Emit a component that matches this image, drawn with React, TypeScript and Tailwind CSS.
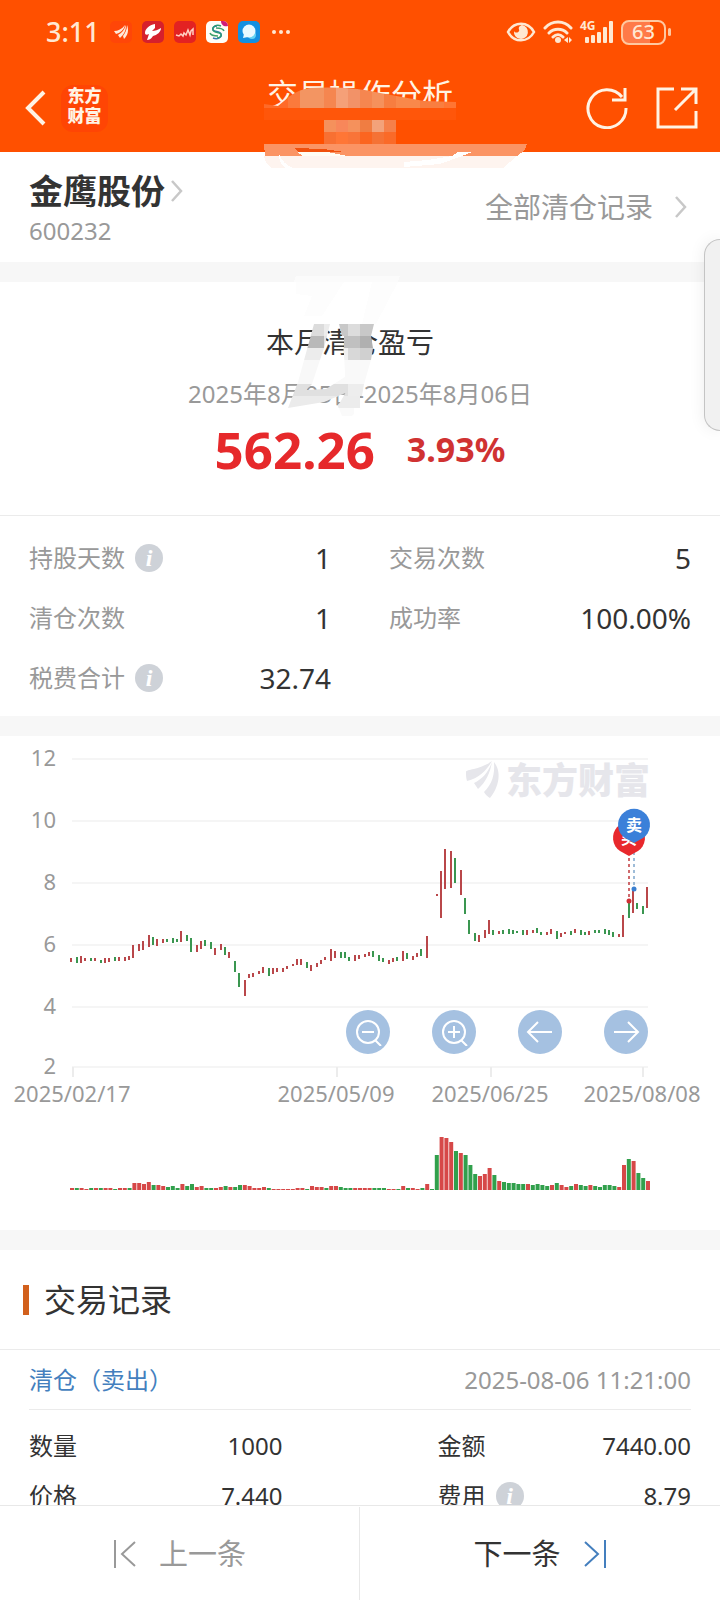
import type { ReactNode } from "react";

interface Stat {
  label: string;
  value: string;
  info?: boolean;
}

const stats: Stat[] = [
  { label: "持股天数", value: "1", info: true },
  { label: "交易次数", value: "5" },
  { label: "清仓次数", value: "1" },
  { label: "成功率", value: "100.00%" },
  { label: "税费合计", value: "32.74", info: true },
];

const tradeDetails: Stat[] = [
  { label: "数量", value: "1000" },
  { label: "金额", value: "7440.00" },
  { label: "价格", value: "7.440" },
  { label: "费用", value: "8.79", info: true },
];

const RED = "#b9474a";
const GREEN = "#3a9650";

// x, top, bottom, r = up day / g = down day
const candleData =
  "71,222,226,r 77,221,227,g 81,220,227,r 85,222,225,r 91,222,225,g 95,222,225,r 101,224,227,g 105,222,227,r 109,222,226,r 115,221,225,g 119,221,225,r 125,221,225,r 129,220,224,r 133,209,222,r 139,208,215,r 143,205,214,r 149,199,211,r 153,201,209,g 157,203,210,r 163,203,207,r 167,203,206,g 173,202,207,g 177,203,206,g 181,195,206,r 187,199,205,g 191,202,216,g 197,209,216,r 201,205,213,r 205,204,210,g 211,206,213,g 215,212,219,r 221,208,214,r 225,211,219,g 229,216,222,r 235,225,236,g 239,237,251,g 245,244,260,r 249,238,242,r 253,237,241,r 259,235,238,r 263,231,237,r 269,232,240,g 273,232,238,r 277,232,236,r 283,232,236,r 287,230,233,r 293,228,230,r 297,223,229,r 301,223,229,r 307,226,232,g 311,229,235,r 317,227,231,r 321,224,228,r 325,221,224,r 331,213,225,r 335,215,222,r 341,216,222,g 345,216,222,g 349,221,225,g 355,219,225,r 359,219,223,r 365,218,221,r 369,216,220,r 373,215,221,g 379,219,225,g 383,222,226,g 389,224,228,r 393,222,226,r 397,221,225,g 403,215,225,r 407,217,223,g 413,220,224,r 417,217,221,r 421,213,220,g 427,200,222,r 437,158,160,r 441,135,182,r 445,113,153,r 451,115,152,r 455,122,147,g 461,134,159,r 465,162,178,g 469,184,198,g 475,197,205,g 479,199,206,r 485,194,202,r 489,184,198,r 493,194,199,g 499,195,198,r 503,194,198,g 509,193,198,g 513,194,198,g 517,195,197,g 523,194,199,g 527,194,199,r 533,194,197,r 537,192,197,g 541,196,199,g 547,196,199,r 551,193,198,r 557,195,203,g 561,197,201,r 565,196,198,r 571,195,199,g 575,193,197,r 581,194,199,g 585,196,199,g 589,195,199,r 595,194,197,g 599,194,197,g 605,193,198,g 609,194,199,g 613,196,201,g 619,198,201,r 623,179,201,r 629,166,182,g 633,155,177,r 637,167,173,g 643,170,178,g 647,151,172,r";

const volumeData =
  "r2 g2 r2 r1 g2 r2 g2 r2 r2 g1 r2 r2 g2 r7 r7 r6 r8 g5 r5 r4 g3 g4 g2 r6 g4 g6 r3 r4 g2 g2 r2 r3 g4 r3 g3 g5 r5 r4 r2 r2 r3 g2 r1 r1 r1 r1 r1 r2 r2 g1 r4 r3 r3 g2 r4 r4 g3 g2 g2 r2 r2 r2 r2 g2 g2 g2 r1 r1 g1 r4 g2 r2 r1 g2 r6 g1 g35 r53 r52 r48 g39 r37 g35 g25 g16 r14 r16 r22 g15 r9 g8 g7 g7 g6 g6 r6 g5 g6 g5 g4 r5 g7 r5 r3 g4 r6 g5 g4 r5 g4 g3 g5 g5 g4 r3 r25 g31 r29 g17 g12 r9";

const candles = candleData.split(" ").map((item) => {
  const [x, top, bottom, dir] = item.split(",");
  return { x: +x, top: +top, bottom: +bottom, color: dir === "r" ? RED : GREEN };
});

const volumes = volumeData.split(" ").map((item, i) => ({
  x: 70 + i * 4.8,
  height: Number(item.slice(1)) || 1,
  color: item[0] === "r" ? "#d64848" : "#31a04c",
}));

const priceAxis = [
  { label: "12", y: 23 },
  { label: "10", y: 85 },
  { label: "8", y: 147 },
  { label: "6", y: 209 },
  { label: "4", y: 271 },
  { label: "2", y: 331 },
];

const dateAxis = [
  { label: "2025/02/17", x: 73 },
  { label: "2025/05/09", x: 337 },
  { label: "2025/06/25", x: 491 },
  { label: "2025/08/08", x: 643 },
];

function InfoButton({ label }: { label: string }) {
  return (
    <button
      aria-label={label + "说明"}
      className="flex size-7 items-center justify-center rounded-full bg-[#ced2d8] font-['Liberation_Serif',serif] text-2xl leading-7 font-bold text-white italic"
    >
      i
    </button>
  );
}

function Divider() {
  return <div className="h-5 shrink-0 bg-[#f7f7f7]" />;
}

function StatusBar() {
  return (
    <div className="flex h-16 items-center justify-between pr-[49px] pl-[46px] text-[#ffe8d2]">
      <div className="flex items-center gap-[10px]">
        <span className="text-[27px] leading-8 font-medium">3:11</span>
        <svg width="22" height="22" viewBox="0 0 22 22">
          <rect width="22" height="22" rx="5" fill="#ff4608" />
          <path d="M4 10c4 0 8-2 11-6-1 5-5 8-9 9z" fill="#ffeadb" />
          <path d="M8 14c4-2 6-5 8-10 0 6-2 9-6 13z" fill="#ffeadb" />
          <path d="M13 15c2-3 4-6 4-11 2 5 1 10-3 14z" fill="#ffeadb" />
        </svg>
        <svg width="22" height="22" viewBox="0 0 22 22">
          <rect width="22" height="22" rx="5" fill="#d6202c" />
          <path
            d="M13 3c-6 1-10 5-10 9 0 2 2 2 4 1l-2 6c2 0 4-1 6-4 4-1 8-4 8-8-3 2-6 3-9 3l3-3z"
            fill="#fff"
          />
        </svg>
        <svg width="22" height="22" viewBox="0 0 22 22">
          <rect width="22" height="22" rx="5" fill="#e32222" />
          <path
            d="M2 14l3 1 2-2 2 2 1-3 2 2 2-5 2 5 1-4 2-2v6"
            fill="none"
            stroke="#ffd0c4"
            strokeWidth="1.5"
          />
        </svg>
        <svg width="22" height="22" viewBox="0 0 22 22">
          <rect width="22" height="22" rx="5" fill="#fffdf6" />
          <g fill="none" strokeWidth="1.5">
            <path d="M7 17c5 2 9-1 8-4s-6-2-8-4c-1-2 1-4 4-4" stroke="#3a78b4" />
            <path d="M15 5c-5-2-9 1-8 4s6 2 8 4c1 2-1 4-4 4" stroke="#2c9a74" />
            <path d="M4 12c1 3 5 3 8 3M18 10c-1-3-5-3-8-3" stroke="#3fa06c" />
          </g>
          <path d="M15 0h2a5 5 0 0 1 5 5c-4 1-7-1-7-5z" fill="#d01c78" />
        </svg>
        <svg width="22" height="22" viewBox="0 0 22 22">
          <rect width="22" height="22" rx="5" fill="#1390e0" />
          <circle cx="14" cy="14" r="4" fill="#64d4f4" />
          <circle cx="11" cy="10" r="6.500" fill="#e8faff" />
          <path d="M6 13l-1 4 5-1z" fill="#e8faff" />
        </svg>
        <svg width="22" height="22" viewBox="0 0 22 22" fill="currentColor">
          <circle cx="4" cy="11" r="2" />
          <circle cx="11" cy="11" r="2" />
          <circle cx="18" cy="11" r="2" />
        </svg>
      </div>
      <div className="flex items-center gap-[7px]">
        <svg width="30" height="22" viewBox="0 0 30 22" fill="none" stroke="currentColor">
          <path d="M2 11c6-11 20-11 26 0-6 11-20 11-26 0z" strokeWidth="2.500" />
          <path
            d="M16 4a7 7 0 1 1-8 6c1 2 4 2 5 0 1-1-1-2 0-4 1-1 2-2 3-2z"
            fill="currentColor"
            stroke="none"
          />
        </svg>
        <svg width="30" height="24" viewBox="0 0 30 24" fill="none" stroke="currentColor">
          <path
            d="M2 8c7-8 19-8 26 0M6 13c5-5 13-5 18 0M10 17c3-3 7-3 10 0"
            strokeWidth="3"
            strokeLinecap="round"
          />
          <circle cx="15" cy="20" r="3" fill="currentColor" stroke="none" />
          <path d="M25 17v6l-4-3zM26 17v6l3-3z" fill="currentColor" stroke="none" />
        </svg>
        <span className="relative">
          <svg width="34" height="24" viewBox="0 0 34 24" fill="currentColor">
            <rect x="5" y="17" width="4" height="6" rx="1" />
            <rect x="11" y="15" width="4" height="8" rx="1" />
            <rect x="17" y="12" width="4" height="11" rx="1" />
            <rect x="23" y="7" width="4" height="16" rx="1" />
            <rect x="29" y="1" width="4" height="22" rx="1" />
          </svg>
          <span className="absolute top-0 left-0 text-xs leading-3 font-bold">4G</span>
        </span>
        <span className="flex items-center gap-[2px]">
          <span className="flex h-[25px] w-[45px] items-center justify-center rounded-lg border-2 border-[#ffc8a0] bg-linear-to-r from-[#ff7a48] from-65% to-[#ff5000] to-65% text-xl leading-5 font-medium">
            63
          </span>
          <span className="h-2 w-[3px] rounded-sm bg-[#ffc8a0]" />
        </span>
      </div>
    </div>
  );
}

function Header() {
  return (
    <header className="shrink-0 bg-[#ff5000] text-[#fff3e4]">
      <StatusBar />
      <div className="grid h-[88px] grid-cols-[1fr_auto_1fr] items-center px-[22px]">
        <div className="flex items-center gap-3">
          <button aria-label="返回">
            <svg width="27" height="38" viewBox="0 0 27 38" fill="none" stroke="currentColor">
              <path d="M22 3L6 19l16 16" strokeWidth="4" />
            </svg>
          </button>
          <a
            href="#home"
            className="flex size-[47px] flex-col items-center justify-center rounded-xl bg-[#ff4504] pb-1 text-[17px] leading-5 font-black"
          >
            <span>东方</span>
            <span>财富</span>
          </a>
        </div>
        <div className="flex flex-col items-center">
          <h1 className="text-[31px] leading-9">交易操作分析</h1>
          <div className="h-7" />
        </div>
        <div className="flex items-center justify-end gap-7">
          <button aria-label="刷新">
            <svg width="42" height="42" viewBox="0 0 42 42" fill="none" stroke="currentColor">
              <path d="M40 21A19 19 0 1 1 36 10" strokeWidth="3" />
              <path d="M39 1v12H26" strokeWidth="3" />
            </svg>
          </button>
          <button aria-label="分享">
            <svg width="42" height="42" viewBox="0 0 42 42" fill="none" stroke="currentColor">
              <path d="M18 2H2v38h38V24" strokeWidth="3" />
              <path d="M25 2h15v15M40 2L19 23" strokeWidth="3" />
            </svg>
          </button>
        </div>
      </div>
    </header>
  );
}

function Chevron() {
  return (
    <svg width="12" height="24" viewBox="0 0 12 24" fill="none" stroke="#c8c8c8">
      <path d="M1 2l9 10-9 10" strokeWidth="2.500" />
    </svg>
  );
}

function StockInfo() {
  return (
    <section className="flex h-[110px] shrink-0 items-center justify-between pr-[33px] pl-[29px]">
      <div className="pt-[3px]">
        <a href="#stock" className="flex items-center gap-[6px]">
          <h2 className="text-[34px] leading-10 font-bold text-[#333]">金鹰股份</h2>
          <Chevron />
        </a>
        <p className="pt-1 text-2xl leading-8 text-[#999]">600232</p>
      </div>
      <a href="#all" className="flex items-center gap-[22px] text-[28px] leading-10 text-[#999]">
        全部清仓记录
        <Chevron />
      </a>
    </section>
  );
}

function ProfitSummary() {
  return (
    <section className="flex shrink-0 flex-col items-center border-b border-[#ebebeb] pt-10 pb-9">
      <h2 className="pr-5 text-[28px] leading-10 text-[#333]">本月清仓盈亏</h2>
      <p className="pt-3 text-2xl leading-10 text-[#999]">2025年8月05日-2025年8月06日</p>
      <p className="flex items-center gap-8 pt-[5px] font-bold">
        <span className="text-[51px] leading-[60px] text-[#e6292b]">562.26</span>
        <span className="text-[34px] leading-10 text-[#d03232]">3.93%</span>
      </p>
    </section>
  );
}

function StatGrid() {
  return (
    <dl className="grid shrink-0 grid-cols-2 gap-x-[58px] px-[29px] pt-3 pb-2">
      {stats.map((stat) => (
        <div className="flex h-[60px] items-center justify-between" key={stat.label}>
          <dt className="flex items-center gap-[10px] text-2xl text-[#999]">
            {stat.label}
            {stat.info && <InfoButton label={stat.label} />}
          </dt>
          <dd className="text-[28px] leading-10 text-[#333]">{stat.value}</dd>
        </div>
      ))}
    </dl>
  );
}

function ChartButton({ label, children }: { label: string; children: ReactNode }) {
  return (
    <button
      aria-label={label}
      className="flex size-11 items-center justify-center rounded-full bg-[#a5c1e1]"
    >
      <svg width="28" height="28" viewBox="0 0 28 28" fill="none" stroke="#fff" strokeWidth="2">
        {children}
      </svg>
    </button>
  );
}

function Watermark() {
  return (
    <g fill="#e6e6eb">
      <path d="M466 36c0-3 14-2 26-11-6 10-13 17-25 20-1-3-1-6-1-9z" />
      <path d="M492 26c-2 11-6 20-14 27l-4-6c8-4 14-10 18-21z" />
      <path d="M494 26c8 10 5 25-4 36-2-1-5-4-6-6 8-8 11-17 10-30z" />
      <text x="506" y="58" fontSize="36" fontWeight="900">
        东方财富
      </text>
    </g>
  );
}

function PriceChart() {
  return (
    <section className="relative shrink-0">
      <svg viewBox="0 0 720 494" className="w-full" fontSize="22">
        {priceAxis.map((tick) => (
          <g key={tick.label}>
            <path d={`M72 ${tick.y}H648`} stroke="#f5f5f5" strokeWidth="2" />
            <text x="56" y={tick.y + 7} textAnchor="end" fill="#999">
              {tick.label}
            </text>
          </g>
        ))}
        {dateAxis.map((tick) => (
          <g key={tick.label}>
            <path d={`M${tick.x} 331v10`} stroke="#ececec" strokeWidth="2" />
            <text x={tick.x - 1} y="366" textAnchor="middle" fill="#999">
              {tick.label}
            </text>
          </g>
        ))}
        <Watermark />
        {candles.map((c) => (
          <rect
            key={c.x}
            x={c.x - 1}
            y={c.top}
            width="2"
            height={c.bottom - c.top}
            fill={c.color}
          />
        ))}
        {volumes.map((v) => (
          <rect key={v.x} x={v.x} y={454 - v.height} width="4" height={v.height} fill={v.color} />
        ))}

        <path d="M629 122v42" stroke="#c0393d" strokeWidth="1.5" strokeDasharray="3 3" />
        <path d="M634 110v42" stroke="#7fa6cc" strokeWidth="1.5" strokeDasharray="3 3" />
        <circle cx="629" cy="165" r="2.500" fill="#d03035" />
        <circle cx="634" cy="153" r="2.500" fill="#3a7fd0" />
        <g fontSize="16" fontWeight="700" textAnchor="middle">
          <path d="M629 120l-9-5a16 16 0 1 1 18 0z" fill="#e8282c" />
          <text x="629" y="108" fill="#fff">
            买
          </text>
          <path d="M634 107l-9-5a16 16 0 1 1 18 0z" fill="#3b80d9" />
          <text x="634" y="95" fill="#fff">
            卖
          </text>
        </g>
      </svg>
      <div className="absolute top-[274px] right-[72px] flex gap-[42px]">
        <ChartButton label="缩小">
          <circle cx="14" cy="14" r="11" />
          <path d="M8 14h12M21 22l6 6" />
        </ChartButton>
        <ChartButton label="放大">
          <circle cx="14" cy="14" r="11" />
          <path d="M8 14h12M14 8v12M21 22l6 6" />
        </ChartButton>
        <ChartButton label="左移">
          <path d="M26 14H3M12 4L2 14l10 10" />
        </ChartButton>
        <ChartButton label="右移">
          <path d="M2 14h23M16 4l10 10-10 10" />
        </ChartButton>
      </div>
    </section>
  );
}

function TradeRecords() {
  return (
    <section className="shrink-0 pb-8">
      <div className="flex h-[100px] items-center gap-[15px] border-b border-[#ebebeb] px-[23px]">
        <span className="h-[30px] w-[6px] bg-[#d2601c]" />
        <h2 className="text-[32px] leading-10 text-[#333]">交易记录</h2>
      </div>
      <div className="px-[29px]">
        <div className="flex h-[60px] items-center justify-between border-b border-[#ebebeb] text-2xl">
          <h3 className="text-[#447fbe]">清仓（卖出）</h3>
          <time className="text-[#999]">2025-08-06 11:21:00</time>
        </div>
        <dl className="grid grid-cols-2 gap-x-[155px] pt-[11px] text-2xl text-[#333]">
          {tradeDetails.map((item) => (
            <div className="flex h-[50px] items-center justify-between" key={item.label}>
              <dt className="flex items-center gap-[10px]">
                {item.label}
                {item.info && <InfoButton label={item.label} />}
              </dt>
              <dd>{item.value}</dd>
            </div>
          ))}
        </dl>
      </div>
    </section>
  );
}

function Pager() {
  return (
    <nav className="grid h-[95px] shrink-0 grid-cols-2 border-t border-[#e8e8e8] bg-white pt-px text-[29px] leading-10">
      <button className="flex items-center justify-center gap-[22px] border-r border-[#e8e8e8] text-[#999]">
        <svg width="24" height="28" viewBox="0 0 24 28" fill="none" stroke="currentColor">
          <path d="M2 0v28M22 2L9 14l13 12" strokeWidth="2" />
        </svg>
        上一条
      </button>
      <button className="flex items-center justify-center gap-[22px] text-[#333]">
        下一条
        <svg width="24" height="28" viewBox="0 0 24 28" fill="none" stroke="#447fbe">
          <path d="M22 0v28M2 2l13 12L2 26" strokeWidth="2" />
        </svg>
      </button>
    </nav>
  );
}

// x, y, width, height, fill
type Cell = [number, number, number, number, string];

const titleCells: Cell[] = [
  [264, 84, 24, 24, "#ff6a28"],
  [288, 84, 12, 24, "#fb7a3c"],
  [300, 84, 24, 24, "#f39562"],
  [324, 84, 12, 24, "#f58650"],
  [336, 84, 12, 24, "#f5a078"],
  [348, 84, 12, 24, "#f29268"],
  [360, 84, 12, 24, "#f58650"],
  [372, 84, 12, 24, "#f5915c"],
  [384, 84, 12, 24, "#f77d40"],
  [396, 84, 24, 24, "#f9884a"],
  [420, 84, 24, 24, "#f97e40"],
  [444, 84, 12, 24, "#ff7533"],
];

const subtitleCells: Cell[] = [
  [264, 108, 192, 12, "#ff560a"],
  [324, 120, 12, 12, "#f5915c"],
  [336, 120, 12, 12, "#f8875a"],
  [348, 120, 12, 12, "#f5915c"],
  [360, 120, 12, 12, "#f07d42"],
  [372, 120, 12, 12, "#f3a27a"],
  [384, 120, 12, 12, "#f5804a"],
  [324, 132, 12, 12, "#f87032"],
  [336, 132, 12, 12, "#ff7636"],
  [348, 132, 12, 12, "#f97438"],
  [360, 132, 12, 12, "#fb6520"],
  [372, 132, 12, 12, "#f57235"],
  [384, 132, 12, 12, "#fa6a28"],
];

const summaryCells: Cell[] = [
  [300, 324, 24, 12, "#dcdcdc"],
  [324, 324, 12, 12, "#ececec"],
  [300, 336, 24, 12, "#b9b9b9"],
  [324, 336, 12, 12, "#e4e4e4"],
  [288, 348, 36, 12, "#ececec"],
  [280, 360, 56, 24, "#f8f8f8"],
  [336, 324, 12, 12, "#c8c8c8"],
  [348, 324, 12, 12, "#dcdcdc"],
  [360, 324, 14, 12, "#c8c8c8"],
  [344, 336, 16, 12, "#c0c0c0"],
  [360, 336, 14, 12, "#b0b0b0"],
  [336, 348, 12, 12, "#f0f0f0"],
  [348, 348, 12, 12, "#d8d8d8"],
  [360, 348, 14, 12, "#d0d0d0"],
  [336, 360, 38, 24, "#f9f9f9"],
  [280, 384, 68, 12, "#e0e0e0"],
  [348, 384, 18, 12, "#ededed"],
  [280, 396, 60, 12, "#ebebeb"],
  [336, 396, 24, 12, "#ececec"],
  [336, 408, 18, 8, "#fafafa"],
];

function Cells({ cells }: { cells: Cell[] }) {
  return (
    <>
      {cells.map(([x, y, w, h, fill]) => (
        <rect key={`${x}-${y}`} x={x} y={y} width={w} height={h} fill={fill} />
      ))}
    </>
  );
}

// pixelated brush strokes that hide the account details
function PrivacyMask() {
  return (
    <svg
      viewBox="0 0 720 430"
      className="pointer-events-none absolute top-0 left-0 w-full"
      shapeRendering="crispEdges"
      aria-hidden="true"
    >
      <clipPath id="title-stroke">
        <path d="M264 104l14 2 12-10q10-7 20-8 40-2 70 5l44 8 32 1v6H264z" />
      </clipPath>
      <clipPath id="summary-stroke">
        <path d="M314 324h16l-6 24-12 36-6 6 20-1 22-14v17l-24 10-36 6 10-26z" />
        <path d="M339 324h35l-3 12 2 12-2 12-7 24-4 24-8 8h-10l-4-10 8-14-2-38-2-18z" />
      </clipPath>
      <g clipPath="url(#title-stroke)">
        <Cells cells={titleCells} />
      </g>
      <Cells cells={subtitleCells} />
      <path d="M264 144h263l-2 6-8 6H265z" fill="#fb9464" />
      <path d="M264 156h253l-14 12H272q-7-5-8-12z" fill="#fef4ef" />
      <path d="M294 148l30 1 20 3h-45z" fill="#f0500c" />
      <path d="M297 152h30l20 4h-44z" fill="#fffdf4" />
      <path d="M404 162l24-2 24-4 6-4h14l-10 4-22 8-36 3z" fill="#fff" />
      <path d="M279 154q4 10 14 14h-8q-6-5-6-14z" fill="#fff" />
      <path d="M296 276h104l-2 6H294z" fill="#fbfbfb" />
      <path d="M296 282h102l-22 42h-14l10-42h-28l-22 34h-18l8-20-16-2z" fill="#fdfdfd" />
      <g clipPath="url(#summary-stroke)">
        <Cells cells={summaryCells} />
      </g>
    </svg>
  );
}

function App() {
  return (
    <div className="relative flex h-screen flex-col overflow-hidden bg-white font-['Noto_Sans','Noto_Sans_CJK_SC',sans-serif]">
      <Header />
      <main className="flex min-h-0 flex-1 flex-col overflow-y-auto [scrollbar-width:none]">
        <StockInfo />
        <Divider />
        <ProfitSummary />
        <StatGrid />
        <Divider />
        <PriceChart />
        <Divider />
        <TradeRecords />
      </main>
      <Pager />
      <PrivacyMask />
      <button
        aria-label="展开侧栏"
        className="absolute top-[239px] right-0 h-[192px] w-4 rounded-l-3xl border border-r-0 border-[#c4c4c4] bg-[#f1f1f1] shadow-[0_0_16px_rgba(0,0,0,0.08)]"
      />
    </div>
  );
}

export default App;
